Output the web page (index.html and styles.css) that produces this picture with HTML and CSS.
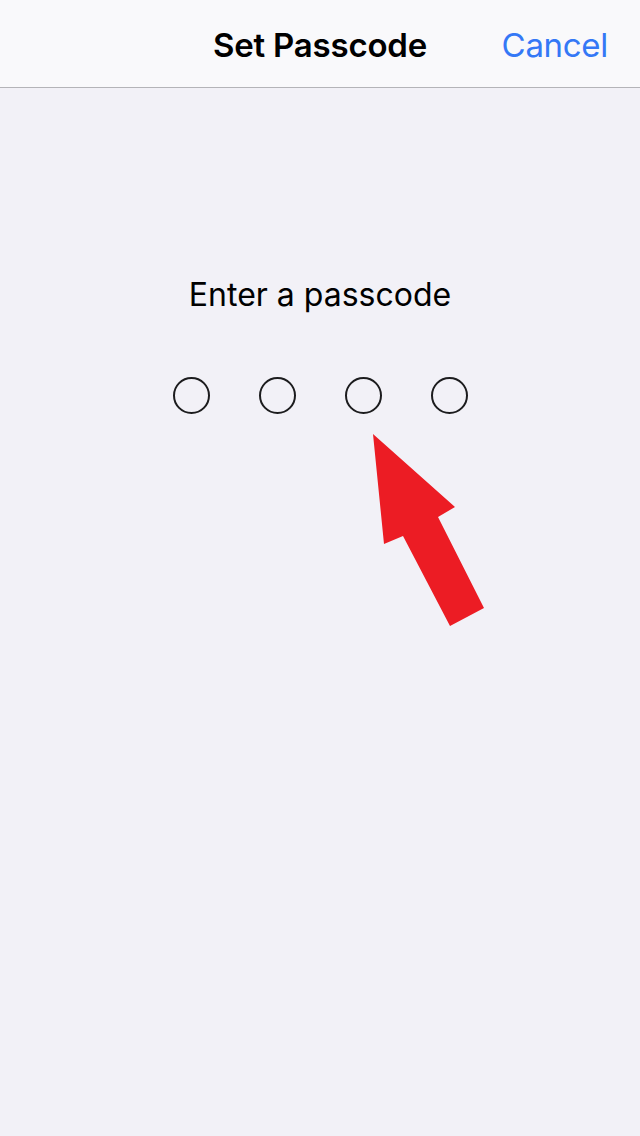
FILE: index.html
```html
<!DOCTYPE html>
<html>
<head>
<meta charset="utf-8">
<link rel="stylesheet" href="styles.css">
</head>
<body>
<div class="screen">
  <header class="navbar">
    <div class="nav-side"></div>
    <div class="nav-title">Set Passcode</div>
    <div class="nav-side nav-right"><span class="cancel">Cancel</span></div>
  </header>
  <main class="content">
    <div class="prompt">Enter a passcode</div>
    <div class="dots">
      <span class="dot"></span>
      <span class="dot"></span>
      <span class="dot"></span>
      <span class="dot"></span>
    </div>
  </main>
  <svg class="arrow" width="640" height="1136" viewBox="0 0 640 1136">
    <polygon points="373,434 455,507 438,517 484,608 450,626 403,536 384,544" fill="#ec1c24"/>
  </svg>
</div>
</body>
</html>
```
FILE: styles.css
```css
html, body {
  margin: 0;
  padding: 0;
}
body {
  font-family: Inter, "Liberation Sans", sans-serif;
  background: #f2f1f7;
}
.screen {
  position: relative;
  width: 640px;
  height: 1136px;
  overflow: hidden;
  background: #f2f1f7;
}
.navbar {
  height: 88px;
  box-sizing: border-box;
  background: #f9f9fb;
  border-bottom: 1px solid #b4b4b8;
  display: grid;
  grid-template-columns: 1fr auto 1fr;
  align-items: center;
  padding: 3px 32px 0 32px;
}
.nav-title {
  font-size: 33px;
  font-weight: 600;
  color: #000;
  letter-spacing: -0.2px;
}
.nav-right {
  display: flex;
  justify-content: flex-end;
}
.cancel {
  font-size: 33px;
  color: #3478f6;
  letter-spacing: -0.3px;
}
.content {
  display: flex;
  flex-direction: column;
  align-items: center;
  padding-top: 187px;
}
.prompt {
  font-size: 32px;
  color: #000;
  line-height: 40px;
}
.dots {
  display: flex;
  gap: 49px;
  margin-top: 62px;
}
.dot {
  width: 37px;
  height: 37px;
  box-sizing: border-box;
  border: 2px solid #1c1c1e;
  border-radius: 50%;
}
.arrow {
  position: absolute;
  left: 0;
  top: 0;
}
```
